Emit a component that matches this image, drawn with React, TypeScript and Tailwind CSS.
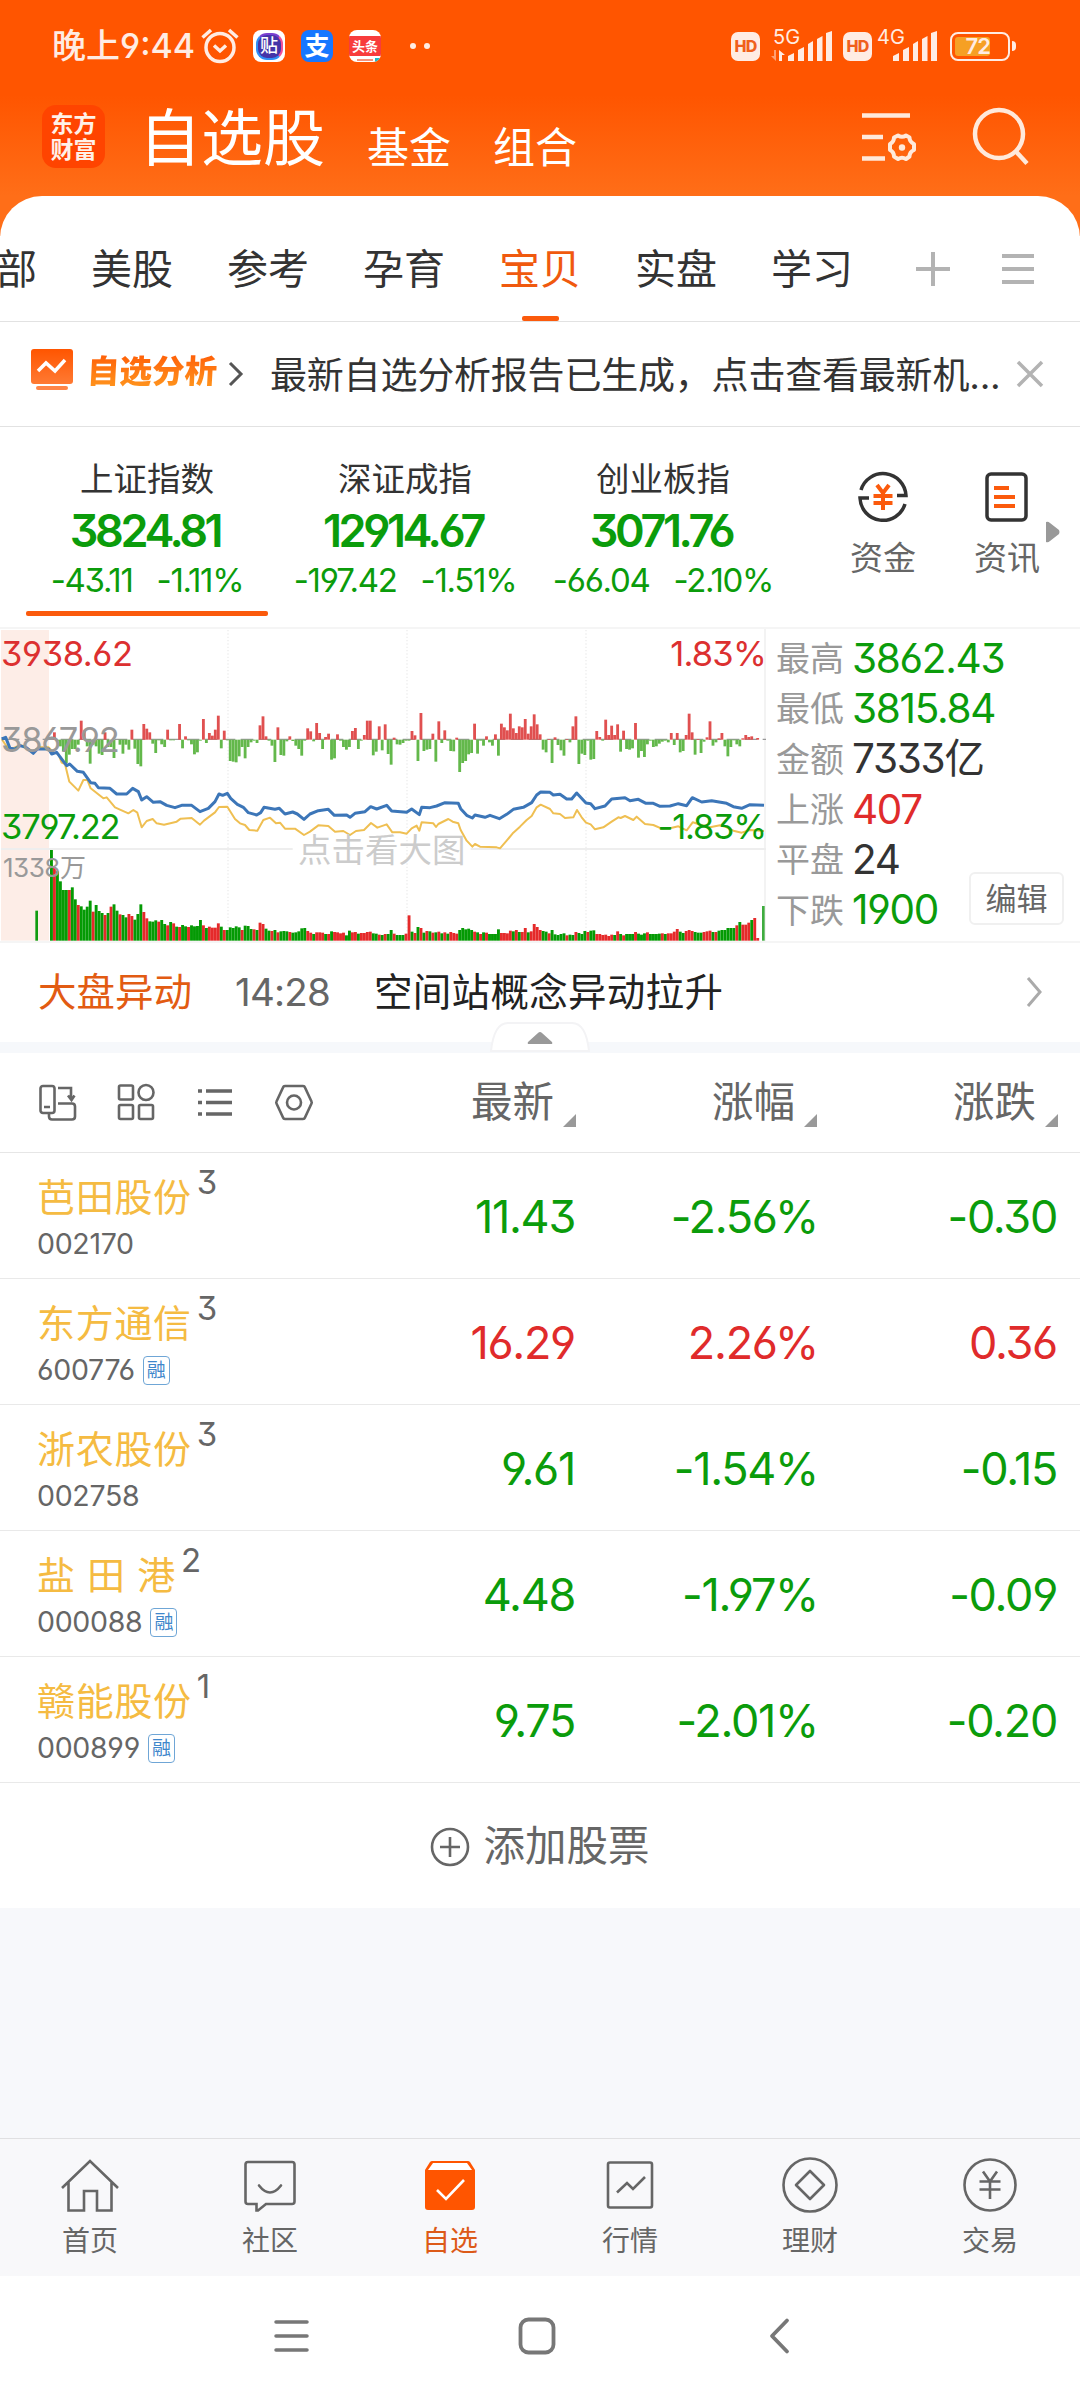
const tabs = ["美股", "参考", "孕育", "宝贝", "实盘", "学习"];

const indexes = [
  { name: "上证指数", value: "3824.81", change: "-43.11", percent: "-1.11%" },
  { name: "深证成指", value: "12914.67", change: "-197.42", percent: "-1.51%" },
  { name: "创业板指", value: "3071.76", change: "-66.04", percent: "-2.10%" },
];

const summary = [
  { label: "最高", value: "3862.43", color: "text-[#0b9c0b]" },
  { label: "最低", value: "3815.84", color: "text-[#0b9c0b]" },
  { label: "金额", value: "7333亿", color: "text-[#333333]" },
  { label: "上涨", value: "407", color: "text-[#e02b2b]" },
  { label: "平盘", value: "24", color: "text-[#333333]" },
  { label: "下跌", value: "1900", color: "text-[#0b9c0b]" },
];

const stocks = [
  { name: "芭田股份", code: "002170", count: 3, margin: false, price: "11.43", percent: "-2.56%", change: "-0.30" },
  { name: "东方通信", code: "600776", count: 3, margin: true, price: "16.29", percent: "2.26%", change: "0.36" },
  { name: "浙农股份", code: "002758", count: 3, margin: false, price: "9.61", percent: "-1.54%", change: "-0.15" },
  { name: "盐 田 港", code: "000088", count: 2, margin: true, price: "4.48", percent: "-1.97%", change: "-0.09" },
  { name: "赣能股份", code: "000899", count: 1, margin: true, price: "9.75", percent: "-2.01%", change: "-0.20" },
];

// one value per minute, in thirds of a pixel
const momentum = [
  0, 22, -5, -20, -35, -70, -45, -28, -28, -15, 57, 28, -20, -72, -15, -20, -42, -46, 22, -22, -22, -55, 0, -15, -42,
  -15, -30, 30, -27, -73, -80, 47, 33, 22, -12, -40, -2, -14, -22, 30, -2, -2, 0, 47, -26, 10, -2, -14, -44, -38, -3,
  62, -10, 20, 12, 30, 72, -26, 27, -2, -64, -66, -68, -50, -22, -56, -22, -8, -3, -10, 43, 70, 10, -3, -18, -67, 37,
  -46, -48, -5, 10, -4, -18, -28, -48, -3, 34, 25, -5, 50, 20, -28, 8, 18, -60, -56, 16, -3, -22, -30, -22, 26, 35,
  -28, -3, 14, 57, 57, -47, -36, 40, -32, 46, -43, -75, 6, -14, -15, -10, -3, -3, 26, 13, -64, 80, -34, -30, -28, 18,
  -66, 55, -10, 28, -3, -34, -35, 6, -97, -70, -64, -44, -40, 48, -42, -3, -18, 10, -8, -18, 16, -48, 48, 37, 28, 78,
  34, 20, 40, 37, 62, 18, 40, 76, 46, 16, -30, -38, 2, -70, 7, -16, -32, -48, 2, -8, 40, 70, -73, -42, -46, -3, -60,
  -58, 26, 8, -3, 60, 14, 42, 14, 46, -36, 27, -28, -30, -26, 50, -54, -34, -52, -14, -3, -22, -20, -12, -6, -3, -8,
  20, -16, 20, -38, -34, 14, 78, 22, -45, 2, -40, -6, 7, 55, -18, -8, 4, 20, -20, -50, -22, -2, -14, -20, 4, 14, 8,
  10, 0, 5, 0,
];

// positive is a rising minute, negative a falling one
const volume = [
  -272, 220, -208, -178, -152, -152, 152, -160, -124, 107, -103, -93, -102, -120, 87, -107, -89, -83, 77, -83, 102,
  -109, -90, 79, -77, -70, 80, 74, -63, -80, -109, 86, 67, -58, -57, -61, 57, -62, -50, 46, -56, 52, -42, 41, -47, -43,
  41, -46, -43, -44, -62, 46, -38, 42, 39, 39, 52, -42, 32, -32, -40, -38, -43, -40, 32, -45, -44, -35, 34, -32, 54,
  50, -36, -30, 29, -32, 25, -28, -29, -28, 26, -24, -25, -28, -37, -38, 29, 24, -20, 25, 25, 24, -20, 20, -28, 26,
  25, 22, 24, -16, -30, 25, 26, -21, 23, 23, 26, 27, -22, -21, 18, -17, 20, -20, -32, 21, -17, -17, -17, 21, 76, -27,
  23, -41, 38, -24, 29, -28, 24, -25, 27, -22, 25, -21, 26, 23, 21, -32, -38, -34, -36, -32, 27, -25, 20, -25, 24,
  -20, -20, -20, -34, 23, 23, 22, 30, -28, 32, -26, 26, 38, -25, 28, 50, 41, 32, -29, -27, 22, -32, -19, -17, -20,
  -22, 16, -18, -17, 26, -23, -20, -29, 26, -30, -31, 20, 20, 17, 18, 14, 18, -17, 28, -20, 16, -20, -20, -20, 26,
  -21, -18, -22, 25, -20, -20, -20, -21, 22, -20, 22, 22, 27, 35, -27, -23, 29, 32, 29, -26, -24, -24, 26, 28, 30,
  -26, 26, -30, -32, -32, -38, -38, -38, 46, -56, 48, 48, 54, -62, 68, 8,
];

const blueLine =
  "5,357 17,352 30,385 45,387 60,377 78,382 100,400 112,387 146,387 155,402 170,397 200,437 209,432 232,454 250,457 272,488 285,490 295,503 330,505 350,522 380,522 398,505 415,515 425,540 440,530 460,547 480,545 500,556 525,563 545,556 575,556 600,575 625,565 645,545 657,522 668,526 682,520 692,535 712,553 730,562 745,578 770,585 782,578 792,562 825,568 838,565 855,582 878,576 892,582 912,598 930,582 955,572 985,568 1003,586 1040,585 1050,592 1065,580 1095,575 1112,560 1130,567 1160,556 1175,573 1220,577 1235,567 1258,584 1265,562 1290,563 1310,558 1335,548 1375,550 1382,566 1400,586 1417,594 1425,585 1455,592 1470,586 1498,596 1520,583 1540,568 1570,562 1595,548 1610,525 1622,516 1650,517 1660,525 1680,523 1700,537 1715,537 1730,519 1758,549 1772,551 1785,566 1815,558 1835,537 1875,533 1890,542 1915,538 1938,550 1960,550 1980,559 2010,558 2035,551 2060,557 2077,533 2105,546 2135,542 2180,550 2200,560 2225,565 2250,554 2292,556";

const yellowLine =
  "5,357 17,375 30,390 60,375 78,382 100,395 115,382 146,382 160,397 175,402 185,428 195,432 208,485 235,512 250,480 262,480 272,505 310,535 320,532 345,562 385,580 400,570 412,578 425,622 440,603 458,597 470,610 492,614 530,605 542,596 575,594 600,614 612,602 645,577 657,561 682,560 705,597 720,610 735,615 748,630 772,632 790,600 810,593 828,610 840,608 855,626 885,626 912,645 930,635 955,616 985,618 1005,635 1030,633 1050,645 1068,633 1092,630 1113,609 1132,623 1160,613 1177,637 1200,637 1220,641 1235,625 1250,617 1258,632 1265,607 1300,610 1308,621 1315,612 1345,597 1358,605 1375,610 1382,630 1400,662 1417,680 1425,672 1440,680 1490,682 1500,685 1520,662 1540,638 1560,620 1580,600 1595,588 1610,562 1622,554 1650,567 1660,580 1680,582 1695,594 1720,592 1731,570 1745,592 1758,608 1772,613 1785,628 1810,622 1835,605 1855,592 1862,594 1875,588 1900,600 1910,590 1935,612 1960,615 1985,626 2010,625 2035,619 2060,631 2078,607 2105,615 2130,622 2160,616 2180,622 2200,632 2225,638 2250,630 2292,633";

const Signal = () => (
  <svg width="44" height="30" viewBox="0 0 44 30" fill="#ffece3">
    <path d="M0 30v-5l6-3v8z" />
    <path d="M10 30V19l6-3v14z" />
    <path d="M20 30V13l5-3v20z" />
    <path d="M29 30V8l5.500-3v25z" />
    <path d="M38 30V2l6-2v30z" />
  </svg>
);

const HdBadge = () => (
  <div className="flex h-[29px] w-[29px] items-center justify-center rounded-[7px] bg-[#ffece3] text-[16px] font-extrabold tracking-[-0.8px] text-[#f0601c]">
    HD
  </div>
);

const StatusBar = () => (
  <div className="flex h-[92px] items-center text-[#ffece3]">
    <div className="ml-[52px] w-[146px] text-[34px] font-medium leading-none whitespace-nowrap">晚上9:44</div>
    <svg className="ml-[3px]" width="38" height="36" viewBox="0 0 38 36" fill="none" stroke="#ffece3" strokeWidth="3.500">
      <circle cx="19" cy="19.500" r="14" />
      <path d="M13 17.500l6 5.500 6-5.500M1.500 9.500L10 2M36.500 9.500L28 2" />
    </svg>
    <div className="ml-[14px] flex h-8 w-8 items-center justify-center rounded-[8px] bg-white">
      <div className="flex h-[27px] w-[27px] items-center justify-center rounded-[11px] border-2 border-[#2f8df5] border-t-[#7a3fd0] border-r-[#f0509a] bg-[#4534a8] text-[18px] font-medium leading-none text-white">
        贴
      </div>
    </div>
    <div className="ml-4 flex h-8 w-8 items-center justify-center rounded-[8px] bg-[#1677ff] text-[25px] font-bold leading-none text-white">
      支
    </div>
    <div className="ml-4 flex h-8 w-8 flex-col overflow-hidden rounded-[8px] bg-white">
      <div className="mt-[6px] flex h-5 items-center justify-center bg-[#f83c3c] text-[13px] font-bold leading-none text-white">
        头条
      </div>
      <div className="mt-[2px] flex items-center justify-end gap-[2px] pr-[1px]">
        <span className="h-[2px] w-4 bg-[#f5937c]" />
        <span className="h-1 w-[5px] bg-[#20b8c4]" />
      </div>
    </div>
    <div className="ml-[29px] flex gap-2">
      <span className="h-[6px] w-[6px] rounded-full bg-[#ffece3]" />
      <span className="h-[6px] w-[6px] rounded-full bg-[#ffece3]" />
    </div>
    <div className="ml-auto mr-[64px] flex items-center">
      <HdBadge />
      <div className="relative ml-[28px] h-[30px]">
        <Signal />
        <span className="absolute -left-[15px] -top-[4px] text-[20px] leading-none">5G</span>
        <svg className="absolute -left-[17px] top-[19px]" width="15" height="11" viewBox="0 0 15 11" fill="#ffece3">
          <path d="M0 6h3V0h2v11z" opacity="0.5" />
          <path d="M8 0l6 5h-3v6H8z" />
        </svg>
      </div>
      <div className="ml-[11px]">
        <HdBadge />
      </div>
      <div className="relative ml-[21px] h-[30px]">
        <Signal />
        <span className="absolute -left-[16px] -top-[4px] text-[20px] leading-none">4G</span>
      </div>
      <div className="ml-[13px] flex h-[29px] w-[60px] items-center rounded-[8px] border-[2.500px] border-[#ffece3] p-[3px]">
        <div className="flex h-[19px] w-[35px] items-center justify-end rounded-[3px] bg-[#f6a024] text-[22px] font-semibold leading-none tracking-[-1px]">
          72
        </div>
      </div>
      <span className="ml-[2px] h-[10px] w-[4px] rounded-r-full bg-[#ffece3]" />
    </div>
  </div>
);

const Header = () => (
  <div className="h-[236px] bg-[linear-gradient(180deg,#ff5500_0px,#ff5500_95px,#ff6e18_196px)]">
    <StatusBar />
    <div className="flex h-[104px] items-start">
      <div className="ml-[42px] mt-[13px] flex h-[63px] w-[63px] flex-col items-center justify-center rounded-[14px] bg-[#ff4400] text-[23px] font-bold leading-[26px] text-[#fff1e8]">
        <div>东方</div>
        <div>财富</div>
      </div>
      <div className="ml-[34px] mt-[16px] text-[62px] leading-[62px] text-white">自选股</div>
      <div className="ml-[42px] mt-[35px] text-[42px] leading-[42px] text-white">基金</div>
      <div className="ml-[42px] mt-[35px] text-[42px] leading-[42px] text-white">组合</div>
      <svg className="ml-auto mt-[20px]" width="58" height="54" viewBox="0 0 58 54" fill="none" stroke="#ffe9db" strokeWidth="4.500">
        <path d="M1 3.500h48M1 25h21M1 46.500h23" />
        <path
          strokeWidth="4"
          strokeLinejoin="round"
          d="M37 23.500q4 2.500 8 0l3.500 2q0 4.500 4.500 6.500v6q-4.500 2-4.500 6.500l-3.500 2.500q-4-2.500-8 0l-4-2.500q0-4.500-4-6.500v-6q4-2 4-6.500z"
        />
        <circle cx="41" cy="35.500" r="3.200" fill="#ffe9db" stroke="none" />
      </svg>
      <svg className="ml-[53px] mr-[50px] mt-[15px]" width="58" height="60" viewBox="0 0 58 60" fill="none" stroke="#ffe9db" strokeWidth="4.500">
        <circle cx="27" cy="27" r="24" />
        <path d="M43.500 44L55 56.500" />
      </svg>
    </div>
  </div>
);

const Tabs = () => (
  <div className="-mt-10 flex h-[126px] items-center overflow-hidden rounded-t-[42px] border-b border-[#e2e2e2] bg-white text-[41px] leading-none text-[#333333]">
    <div className="-ml-[4px] mt-[21px] whitespace-nowrap">部</div>
    <div className="flex gap-[54px] pl-[54px] pt-[21px]">
      {tabs.map((tab) => (
        <div key={tab} className={tab === "宝贝" ? "relative whitespace-nowrap text-[#f0590e]" : "whitespace-nowrap"}>
          {tab}
          {tab === "宝贝" && (
            <span className="absolute left-[23px] top-[67px] h-[5px] w-[37px] rounded-[2px] bg-[#fb5a0c]" />
          )}
        </div>
      ))}
    </div>
    <svg className="ml-auto mr-[42px] mt-[20px] shrink-0" width="124" height="36" viewBox="0 0 124 36" fill="none" stroke="#b3b3b3" strokeWidth="4">
      <path d="M2 18h34M19 1v34" />
      <path d="M88 5h32M88 18h32M88 31h32" />
    </svg>
  </div>
);

const Notice = () => (
  <div className="flex h-[105px] items-center border-b border-[#e2e2e2]">
    <svg className="-mt-2 ml-[31px] shrink-0" width="42" height="42" viewBox="0 0 42 42">
      <defs>
        <linearGradient id="report" x1="0" y1="0" x2="0" y2="1">
          <stop offset="0" stopColor="#ff5500" />
          <stop offset="1" stopColor="#ff7a33" />
        </linearGradient>
      </defs>
      <rect width="42" height="35" rx="3" fill="url(#report)" />
      <path d="M7 22l8-8 9 8 10-11" fill="none" stroke="#fff" strokeWidth="3.500" />
      <rect x="5" y="37" width="32" height="4" rx="2" fill="#ff8547" />
    </svg>
    <div className="-mt-[4px] ml-[14px] w-[132px] -skew-x-3 bg-linear-to-b from-[#ff5a05] to-[#ff9a1f] bg-clip-text text-[32.500px] font-black leading-[40px] whitespace-nowrap text-transparent">
      自选分析
    </div>
    <svg className="ml-[9px] shrink-0" width="16" height="26" viewBox="0 0 16 26" fill="none" stroke="#555555" strokeWidth="3">
      <path d="M2 2l11 11L2 24" />
    </svg>
    <div className="ml-[26px] mt-[2px] text-[37px] leading-none tracking-[-0.200px] whitespace-nowrap text-[#333333]">
      最新自选分析报告已生成，点击查看最新机...
    </div>
    <svg className="ml-auto mr-[36px] shrink-0" width="28" height="28" viewBox="0 0 28 28" fill="none" stroke="#b3b3b3" strokeWidth="3.500">
      <path d="M2 2l24 24M26 2L2 26" />
    </svg>
  </div>
);

const Indexes = () => (
  <div className="flex h-[200px]">
    <div className="flex pl-[18px]">
      {indexes.map((item, i) => (
        <div key={item.name} className="flex w-[258px] flex-col items-center whitespace-nowrap">
          <div className="mt-[34px] text-[33.500px] leading-[36px] text-[#333333]">{item.name}</div>
          <div className="mt-[10px] -ml-[4px] text-[45px] font-semibold leading-[48px] tracking-[-3.400px] text-[#0b9c0b]">
            {item.value}
          </div>
          <div className="mt-[5px] flex gap-[24px] text-[33px] leading-[40px] tracking-[-1.300px] text-[#0b9c0b]">
            <span>{item.change}</span>
            <span>{item.percent}</span>
          </div>
          {i === 0 && <div className="mt-[11px] h-[5px] w-[242px] rounded-[2px] bg-[#fb5a0c]" />}
        </div>
      ))}
    </div>
    <div className="ml-[58px] mt-[42px] flex w-[66px] flex-col items-center text-[33px] leading-[36px] text-[#666666]">
      <svg width="54" height="56" viewBox="0 0 54 56" fill="none" stroke="#333333" strokeWidth="3.500">
        <path d="M5 21a23 23 0 0 1 45 5.500h-9M49 35a23 23 0 0 1-45-6h9" />
        <g stroke="#fb5a0c" strokeWidth="4">
          <path d="M21 16l6 8 6-8M17.500 27h19M17.500 34h19M27 24v17" />
        </g>
      </svg>
      <div className="mt-[15px]">资金</div>
    </div>
    <div className="ml-[58px] mt-[42px] flex w-[66px] flex-col items-center text-[33px] leading-[36px] text-[#666666]">
      <svg width="54" height="56" viewBox="0 0 54 56" fill="none" stroke="#333333" strokeWidth="3.500">
        <rect x="7" y="5" width="39" height="46" rx="4" />
        <path d="M14 19h15M14 28h21M14 37h21" stroke="#fb5a0c" strokeWidth="4" />
      </svg>
      <div className="mt-[15px]">资讯</div>
    </div>
    <svg className="ml-[6px] mt-[94px]" width="14" height="22" viewBox="0 0 14 22">
      <path d="M0 1q2-1 4 1l9 7q1 2 0 4l-9 7q-2 2-4 1z" fill="#999999" />
    </svg>
  </div>
);

const Chart = () => (
  <div className="relative h-[312px] w-[766px] border-r-2 border-[#f3f3f3]">
    <svg className="block" width="766" height="312" viewBox="0 27 2298 936">
      <rect x="3" y="30" width="144" height="932" fill="#fdede7" />
      <g stroke="#ececec" strokeWidth="4" strokeDasharray="4 6">
        <path d="M684 30V962M1221 30V962M1758 30V962" />
      </g>
      <path d="M3 687H878M1412 687H2298" stroke="#eeeeee" strokeWidth="6" />
      <path d="M20 358H2298" stroke="#999999" strokeWidth="4" strokeDasharray="38 16" />
      {momentum.map((v, i) => (
        <rect
          key={i}
          x={150 + i * 8.94}
          y={v > 0 ? 359 - v : 359}
          width="8.500"
          height={Math.abs(v)}
          fill={v > 0 ? "#e05050" : "#63b84b"}
        />
      ))}
      <polyline points={yellowLine} fill="none" stroke="#efbf52" strokeWidth="6" strokeLinejoin="round" />
      <polyline points={blueLine} fill="none" stroke="#3c76b8" strokeWidth="9" strokeLinejoin="round" />
      <rect x="106" y="872" width="8" height="90" fill="#109c10" />
      {volume.map((v, i) => (
        <rect
          key={i}
          x={150 + i * 8.94}
          y={962 - Math.abs(v)}
          width="8.700"
          height={Math.abs(v)}
          fill={v > 0 ? "#e52a2a" : "#049a04"}
        />
      ))}
      <rect x="2286" y="858" width="8" height="104" fill="#3fac3f" />
    </svg>
    <div className="absolute left-[1px] top-[7px] text-[34.500px] leading-[36px] tracking-[-0.400px] text-[#dc3030]">3938.62</div>
    <div className="absolute right-[-2px] top-[7px] text-[34.500px] leading-[36px] tracking-[-0.800px] text-[#dc3030]">1.83%</div>
    <div className="absolute left-[1px] top-[93px] text-[34.500px] leading-[36px] tracking-[-1.200px] text-[#999999]">3867.92</div>
    <div className="absolute left-[1px] top-[180px] text-[34.500px] leading-[36px] tracking-[-1.200px] text-[#0b9c0b]">3797.22</div>
    <div className="absolute right-[-2px] top-[180px] text-[34.500px] leading-[36px] tracking-[-1.200px] text-[#0b9c0b]">-1.83%</div>
    <div className="absolute left-[3px] top-[221px] text-[26px] leading-[36px] tracking-[-0.500px] text-[#999999]">1338万</div>
    <div className="absolute left-[298px] top-[203px] text-[33.500px] leading-[36px] text-[#cccccc]">点击看大图</div>
  </div>
);

const Market = () => (
  <div className="flex h-[316px] border-y-2 border-[#f5f5f5]">
    <Chart />
    <div className="relative flex-1 pl-[10px] pt-[5px]">
      {summary.map((row) => (
        <div key={row.label} className="flex h-[50.300px] items-center whitespace-nowrap">
          <span className="w-[76px] text-[34px] leading-none text-[#999999]">{row.label}</span>
          <span className={`text-[40.500px] leading-none tracking-[-1.300px] ${row.color}`}>{row.value}</span>
        </div>
      ))}
      <div className="absolute right-[16px] top-[243px] flex h-[53px] w-[95px] items-center justify-center rounded-[6px] border-2 border-[#f0f0f0] bg-white text-[31px] leading-none text-[#666666]">
        编辑
      </div>
    </div>
  </div>
);

const Alert = () => (
  <div className="relative flex h-[110px] items-start border-b-[11px] border-[#f6f8fb] text-[38.500px] leading-[40px]">
    <div className="ml-[38px] mt-[29px] text-[#e25b12]">大盘异动</div>
    <div className="ml-[43px] mt-[29px] w-[97px] tracking-[-0.800px] text-[#666666]">14:28</div>
    <div className="ml-[42px] mt-[29px] tracking-[0.300px] text-[#222222]">空间站概念异动拉升</div>
    <svg className="ml-auto mr-[37px] mt-[34px]" width="17" height="30" viewBox="0 0 17 30" fill="none" stroke="#aaaaaa" strokeWidth="3">
      <path d="M2 1l12 14L2 29" />
    </svg>
    <svg className="absolute left-[490px] top-[78px]" width="100" height="32" viewBox="0 0 100 32">
      <path d="M1 30Q4 2 18 2H82Q96 2 99 30Z" fill="#fff" stroke="#f3f3f5" strokeWidth="2" />
      <path d="M38 21l10-9q2-2 4 0l10 9q1 2-1 2H39q-2 0-1-2z" fill="#999999" />
    </svg>
  </div>
);

const SortLabel = ({ text, className }: { text: string; className: string }) => (
  <div className={`flex items-center justify-end ${className}`}>
    <span>{text}</span>
    <svg className="ml-[9px] mt-[36px]" width="13" height="13" viewBox="0 0 13 13">
      <path d="M13 0v13H0z" fill="#999999" />
    </svg>
  </div>
);

const ListHeader = () => (
  <div className="flex h-[100px] items-center border-b border-[#e6e6e6] text-[41.500px] leading-none whitespace-nowrap text-[#666666]">
    <svg className="ml-[38px] shrink-0" width="276" height="40" viewBox="0 0 276 40" fill="none" stroke="#666666" strokeWidth="2.600">
      <rect x="2.500" y="3" width="14" height="27" rx="2.500" />
      <path d="M6 24h6M20 5h13v10M30 12.500l3.500 4.500 3-4.500M20 20.500h14q3 0 3 3v10q0 3-3 3H14q-3 0-3-3v-3" />
      <rect x="81" y="2.500" width="14" height="14" rx="1.500" />
      <circle cx="108" cy="9.500" r="7.500" />
      <rect x="81" y="22" width="14" height="14" rx="1.500" />
      <rect x="101" y="22" width="14" height="14" rx="1.500" />
      <path d="M168 8h26M168 19.500h26M168 31h26M160 8h4M160 19.500h4M160 31h4" strokeWidth="3.500" />
      <path d="M247 3h18q1.500 0 2 1.500l6.500 14q.5 1 0 2l-6.500 14q-.5 1.500-2 1.500h-18q-1.500 0-2-1.500l-6.500-14q-.5-1 0-2l6.500-14q.5-1.500 2-1.500z" />
      <circle cx="256" cy="19.500" r="7" />
    </svg>
    <SortLabel text="最新" className="w-[262px]" />
    <SortLabel text="涨幅" className="w-[241px]" />
    <SortLabel text="涨跌" className="w-[241px]" />
  </div>
);

const StockRow = ({ stock }: { stock: (typeof stocks)[number] }) => (
  <div
    className={`flex h-[126px] items-center border-b border-[#e9e9e9] pt-[1px] text-[45px] leading-none tracking-[-1.300px] whitespace-nowrap ${
      stock.change.startsWith("-") ? "text-[#0b9c0b]" : "text-[#e02b2b]"
    }`}
  >
    <div className="h-full w-[316px] pl-[37px] tracking-normal">
      <div className="flex items-start">
        <div className="mt-[23px] text-[38px] leading-[40px] tracking-[0.700px] text-[#f5bb42]">{stock.name}</div>
        <div className="ml-[5px] mt-[11px] text-[33px] leading-[34px] text-[#666666]">{stock.count}</div>
      </div>
      <div className="mt-[10px] flex h-[34px] items-center text-[28.500px] leading-none text-[#666666]">
        <span className="tracking-[-0.300px]">{stock.code}</span>
        {stock.margin && (
          <span className="ml-[8px] flex h-[29px] w-[27px] items-center justify-center rounded-[4px] border-[1.500px] border-[#6fa6d6] text-[19px] leading-none text-[#3f87cb]">
            融
          </span>
        )}
      </div>
    </div>
    <div className="w-[259px] text-right">{stock.price}</div>
    <div className="w-[243px] text-right">{stock.percent}</div>
    <div className="w-[239px] text-right">{stock.change}</div>
  </div>
);

const BottomNav = () => (
  <div className="grid h-[138px] grid-cols-6 border-t border-[#e0e0e2] bg-[#f8f8fa] text-[28px] leading-[32px] text-[#666666]">
    <div className="flex flex-col items-center pt-[17px]">
      <svg width="60" height="60" viewBox="0 0 60 60" fill="none" stroke="#666666" strokeWidth="2.600">
        <path d="M2 32L30 5l28 27M8.500 26v28.500H24V35h13v19.500h14.500V26" />
      </svg>
      <div className="mt-[9px]">首页</div>
    </div>
    <div className="flex flex-col items-center pt-[17px]">
      <svg width="60" height="60" viewBox="0 0 60 60" fill="none" stroke="#666666" strokeWidth="2.600">
        <path d="M8 6h44q2.500 0 2.500 2.500v37q0 2.500-2.500 2.500H26l-8 6.500h-1.500V48H8q-2.500 0-2.500-2.500v-37Q5.500 6 8 6z" />
        <path d="M19 29.500q11 14 22 0" strokeLinecap="round" />
      </svg>
      <div className="mt-[9px]">社区</div>
    </div>
    <div className="flex flex-col items-center pt-[17px] text-[#dd5a18]">
      <svg width="60" height="60" viewBox="0 0 60 60">
        <path d="M12 5h36q1 0 2 1l5 8v37q0 3-3 3H8q-3 0-3-3V14l5-8q1-1 2-1z" fill="#ff5500" />
        <path d="M13 7h34l5 7H8z" fill="#fff" />
        <path d="M17 34l9 9 18-19" fill="none" stroke="#fff" strokeWidth="2.600" />
      </svg>
      <div className="mt-[9px]">自选</div>
    </div>
    <div className="flex flex-col items-center pt-[17px]">
      <svg width="60" height="60" viewBox="0 0 60 60" fill="none" stroke="#666666" strokeWidth="2.600">
        <rect x="8" y="6.500" width="44" height="45" rx="2" />
        <path d="M17 36.500l10-9.500 6 6 12-12" />
      </svg>
      <div className="mt-[9px]">行情</div>
    </div>
    <div className="flex flex-col items-center pt-[17px]">
      <svg width="60" height="60" viewBox="0 0 60 60" fill="none" stroke="#666666" strokeWidth="2.600" strokeLinejoin="round">
        <circle cx="30" cy="29" r="26.500" />
        <path d="M30 15l14 14-14 14-14-14z" />
      </svg>
      <div className="mt-[9px]">理财</div>
    </div>
    <div className="flex flex-col items-center pt-[17px]">
      <svg width="60" height="60" viewBox="0 0 60 60" fill="none" stroke="#666666" strokeWidth="2.600">
        <circle cx="30" cy="29" r="25.500" />
        <path d="M23 15.500l7 10 7-10M19.500 25.500h21M19.500 33.500h21M30 25.500V43" />
      </svg>
      <div className="mt-[9px]">交易</div>
    </div>
  </div>
);

const SystemNav = () => (
  <div className="flex h-[124px] items-center bg-white pb-[5px]">
    <svg className="ml-[273px]" width="37" height="40" viewBox="0 0 37 40" fill="none" stroke="#777777" strokeWidth="3.500" strokeLinecap="round">
      <path d="M3 6h31M3 20h31M3 34h31" />
    </svg>
    <svg className="ml-[208px]" width="38" height="40" viewBox="0 0 38 40" fill="none" stroke="#777777" strokeWidth="3.800">
      <rect x="2.500" y="3.500" width="33" height="33" rx="8" />
    </svg>
    <svg className="ml-[213px]" width="22" height="40" viewBox="0 0 22 40" fill="none" stroke="#777777" strokeWidth="3.800" strokeLinecap="round" strokeLinejoin="round">
      <path d="M18 4.500L3 20l15 15.500" />
    </svg>
  </div>
);

export default function App() {
  return (
    <div className="flex h-[2400px] w-[1080px] flex-col overflow-hidden bg-[#f7f8fb] font-[Inter,'Noto_Sans_CJK_SC',sans-serif] [font-feature-settings:'cv03','cv04','cv09']">
      <Header />
      <div className="bg-white">
        <Tabs />
        <Notice />
        <Indexes />
        <Market />
        <Alert />
        <ListHeader />
        {stocks.map((stock) => (
          <StockRow key={stock.code} stock={stock} />
        ))}
        <div className="flex h-[125px] items-center justify-center pt-[2px] text-[41.500px] leading-none text-[#666666]">
          <svg className="mr-[13px]" width="40" height="40" viewBox="0 0 40 40" fill="none" stroke="#666666" strokeWidth="2.600">
            <circle cx="20" cy="20" r="18" />
            <path d="M10 20h20M20 10v20" />
          </svg>
          添加股票
        </div>
      </div>
      <div className="mt-auto">
        <BottomNav />
        <SystemNav />
      </div>
    </div>
  );
}
